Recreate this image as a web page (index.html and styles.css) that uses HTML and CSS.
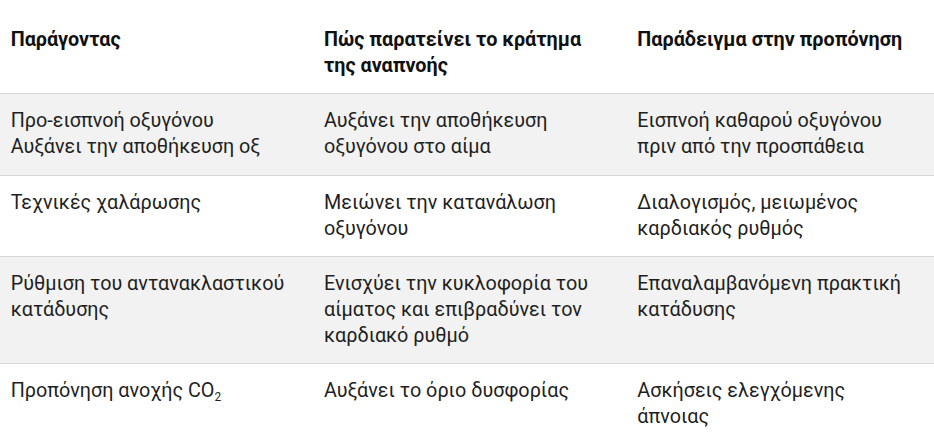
FILE: index.html
```html
<!DOCTYPE html>
<html lang="el">
<head>
<meta charset="utf-8">
<link rel="stylesheet" href="styles.css">
</head>
<body>
<table class="tbl">
  <thead>
    <tr>
      <th>Παράγοντας</th>
      <th>Πώς παρατείνει το κράτημα της αναπνοής</th>
      <th>Παράδειγμα στην προπόνηση</th>
    </tr>
  </thead>
  <tbody>
    <tr class="alt">
      <td>Προ-εισπνοή οξυγόνου<br>Αυξάνει την αποθήκευση οξ</td>
      <td>Αυξάνει την αποθήκευση οξυγόνου στο αίμα</td>
      <td>Εισπνοή καθαρού οξυγόνου πριν από την προσπάθεια</td>
    </tr>
    <tr>
      <td>Τεχνικές χαλάρωσης</td>
      <td>Μειώνει την κατανάλωση οξυγόνου</td>
      <td>Διαλογισμός, μειωμένος καρδιακός ρυθμός</td>
    </tr>
    <tr class="alt">
      <td>Ρύθμιση του αντανακλαστικού κατάδυσης</td>
      <td>Ενισχύει την κυκλοφορία του αίματος και επιβραδύνει τον καρδιακό ρυθμό</td>
      <td>Επαναλαμβανόμενη πρακτική κατάδυσης</td>
    </tr>
    <tr>
      <td>Προπόνηση ανοχής CO<sub class="sub">2</sub></td>
      <td>Αυξάνει το όριο δυσφορίας</td>
      <td>Ασκήσεις ελεγχόμενης άπνοιας</td>
    </tr>
  </tbody>
</table>
</body>
</html>
```
FILE: styles.css
```css
html, body {
  margin: 0;
  padding: 0;
  background: #ffffff;
  overflow: hidden;
}
body {
  font-family: Roboto, "Noto Sans", sans-serif;
  font-size: 19.8px;
  line-height: 25.7px;
  color: #1f1f1f;
}
.tbl {
  width: 940px;
  margin-top: 13px;
  border-collapse: collapse;
  table-layout: fixed;
}
.tbl th,
.tbl td {
  text-align: left;
  vertical-align: top;
  padding: 14px 26px 15px 10.7px;
  border-bottom: 1px solid #d6d6d6;
}
.tbl th {
  font-weight: 700;
  color: #111111;
}
.tbl tbody tr:last-child td {
  border-bottom: none;
}
.tbl .alt {
  background: #f2f2f2;
}
.sub {
  font-size: 0.6em;
  line-height: 0;
  vertical-align: -0.3em;
}
```
